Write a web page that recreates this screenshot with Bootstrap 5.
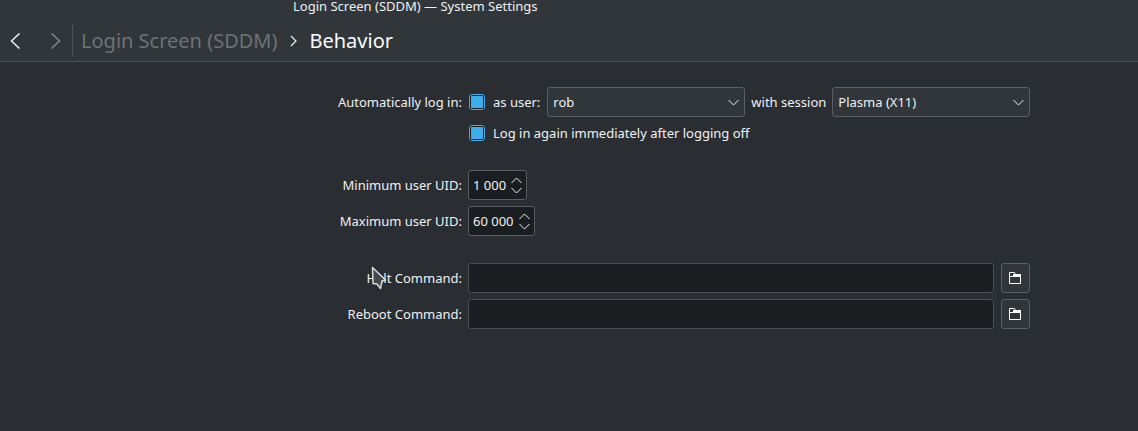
<!DOCTYPE html>
<html lang="en">
<head>
    <meta charset="UTF-8">
    <title>Login Screen (SDDM) — System Settings</title>
    <link href="https://cdn.jsdelivr.net/npm/bootstrap@5.3.3/dist/css/bootstrap.min.css" rel="stylesheet">
    <style>
        html, body { height: 100%; }
        body {
            background: #2a2e32;
            color: #eff0f1;
            font-family: "Noto Sans", sans-serif;
            font-size: 13px;
            line-height: 18px;
            overflow: hidden;
            position: relative;
        }
        .app-head { background: #31363b; height: 62px; border-bottom: 1px solid #4d5155; }
        .win-title { height: 12px; line-height: 12px; padding-left: 293px; white-space: nowrap; }
        .tool-row { height: 49px; padding-top: 9px; }
        .nav-arrow { width: 32px; }
        .tool-sep { width: 1px; height: 32px; background: #4d5155; margin-right: 8px; }
        .crumb-parent { font-size: 20px; line-height: 28px; color: #6e7276; }
        .crumb-current { font-size: 20px; line-height: 28px; color: #fcfcfc; }
        .crumb-arrow { margin: 0 11px 0 13px; }
        .settings-form {
            display: grid;
            grid-template-columns: 132px 562px;
            column-gap: 6px;
            margin-left: 330px;
            padding-top: 25px;
            align-items: center;
        }
        .field-label { text-align: right; white-space: nowrap; }
        .combo {
            height: 30px;
            flex: 0 0 auto;
            background: #31363b;
            border: 1px solid #5b5f63;
            border-radius: 3px;
            padding: 0 5px 0 5px;
        }
        .combo-user { width: 198px; }
        .combo-session { width: 198px; }
        .check-box {
            width: 16px;
            height: 16px;
            flex: none;
            margin-left: 1px;
            border: 1px solid #3daee9;
            border-radius: 3px;
            background: #1b1e20;
            padding: 1px;
        }
        .check-box span { display: block; width: 100%; height: 100%; background: #3daee9; border-radius: 1px; }
        .as-user { margin: 0 7px 0 8px; white-space: nowrap; }
        .sess-label { margin: 0 6px; white-space: nowrap; }
        .login-again { height: 18px; margin-top: 7px; margin-bottom: 28px; }
        .login-again span.txt { margin-left: 8px; white-space: nowrap; }
        .spin-box {
            height: 30px;
            background: #1b1e20;
            border: 1px solid #5b5f63;
            border-radius: 3px;
            padding: 0 4px;
            width: max-content;
            gap: 5px;
        }
        .spin-gap { margin-bottom: 6px; }
        .spin-last { margin-bottom: 27px; }
        .path-edit { height: 30px; flex: 1; background: #1b1e20; border: 1px solid #4a4e52; border-radius: 3px; }
        .folder-btn {
            width: 29px;
            height: 30px;
            background: #31363b;
            border: 1px solid #5b5f63;
            border-radius: 3px;
            margin-left: 7px;
            padding-right: 1px;
        }
        .path-gap { margin-bottom: 6px; }
        .mouse-cursor { position: absolute; left: 371px; top: 266px; }
    </style>
</head>
<body>

<div class="app-head">
    <div class="win-title">Login Screen (SDDM) — System Settings</div>
    <div class="tool-row d-flex align-items-center">
        <div class="nav-arrow d-flex justify-content-center">
            <svg width="12" height="16" viewBox="0 0 12 16"><path d="M9.5 0.5 L1.5 8 L9.5 15.5" fill="none" stroke="#eff0f1" stroke-width="1.5"/></svg>
        </div>
        <div class="nav-arrow d-flex justify-content-center ms-2">
            <svg width="12" height="16" viewBox="0 0 12 16"><path d="M1.5 0.5 L9.5 8 L1.5 15.5" fill="none" stroke="#84888b" stroke-width="1.5"/></svg>
        </div>
        <div class="tool-sep"></div>
        <span class="crumb-parent">Login Screen (SDDM)</span>
        <svg class="crumb-arrow" width="8" height="12" viewBox="0 0 8 12"><path d="M1 1 L6 6 L1 11" fill="none" stroke="#eff0f1" stroke-width="1.2"/></svg>
        <span class="crumb-current">Behavior</span>
    </div>
</div>

<form class="settings-form">
    <div class="field-label">Automatically log in:</div>
    <div class="d-flex align-items-center">
        <div class="check-box"><span></span></div>
        <span class="as-user">as user:</span>
        <div class="combo combo-user d-flex align-items-center justify-content-between">
            <span>rob</span>
            <svg width="11" height="7" viewBox="0 0 11 7"><path d="M0.5 1 L5.5 6 L10.5 1" fill="none" stroke="#eff0f1"/></svg>
        </div>
        <span class="sess-label">with session</span>
        <div class="combo combo-session d-flex align-items-center justify-content-between">
            <span>Plasma (X11)</span>
            <svg width="11" height="7" viewBox="0 0 11 7"><path d="M0.5 1 L5.5 6 L10.5 1" fill="none" stroke="#eff0f1"/></svg>
        </div>
    </div>

    <div></div>
    <div class="login-again d-flex align-items-center">
        <div class="check-box"><span></span></div>
        <span class="txt">Log in again immediately after logging off</span>
    </div>

    <div class="field-label spin-gap">Minimum user UID:</div>
    <div class="spin-gap">
        <div class="spin-box d-flex align-items-center">
            <span>1 000</span>
            <svg width="11" height="17" viewBox="0 0 11 17"><path d="M0.5 6 L5.5 1 L10.5 6 M0.5 11 L5.5 16 L10.5 11" fill="none" stroke="#eff0f1"/></svg>
        </div>
    </div>

    <div class="field-label spin-last">Maximum user UID:</div>
    <div class="spin-last">
        <div class="spin-box d-flex align-items-center">
            <span>60 000</span>
            <svg width="11" height="17" viewBox="0 0 11 17"><path d="M0.5 6 L5.5 1 L10.5 6 M0.5 11 L5.5 16 L10.5 11" fill="none" stroke="#eff0f1"/></svg>
        </div>
    </div>

    <div class="field-label path-gap">Halt Command:</div>
    <div class="d-flex path-gap">
        <div class="path-edit"></div>
        <div class="folder-btn d-flex align-items-center justify-content-center">
            <svg width="12" height="12" viewBox="0 0 12 12"><path d="M0.5 0.5 H5.5 L6.5 2.5 H11.5 V11.5 H0.5 Z" fill="none" stroke="#fcfcfc"/><path d="M4 2 H12 V5 H1 V4 H4 Z" fill="#fcfcfc"/></svg>
        </div>
    </div>

    <div class="field-label">Reboot Command:</div>
    <div class="d-flex">
        <div class="path-edit"></div>
        <div class="folder-btn d-flex align-items-center justify-content-center">
            <svg width="12" height="12" viewBox="0 0 12 12"><path d="M0.5 0.5 H5.5 L6.5 2.5 H11.5 V11.5 H0.5 Z" fill="none" stroke="#fcfcfc"/><path d="M4 2 H12 V5 H1 V4 H4 Z" fill="#fcfcfc"/></svg>
        </div>
    </div>
</form>

<svg class="mouse-cursor" width="16" height="24" viewBox="0 0 16 24"><path d="M1.5 1.5 L14.5 14 L11 15 L9.5 22.5 L6 18 L2 17.5 Z" fill="#45474a" stroke="#d8dadb" stroke-width="1.5" stroke-linejoin="round"/></svg>

<script src="https://cdn.jsdelivr.net/npm/bootstrap@5.3.3/dist/js/bootstrap.bundle.min.js"></script>
</body>
</html>
